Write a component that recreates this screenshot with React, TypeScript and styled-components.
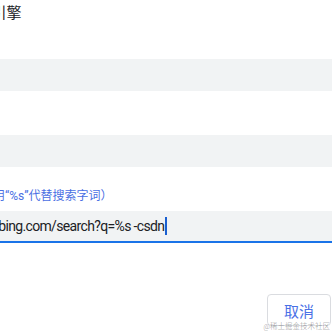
import React from 'react';
import styled, { createGlobalStyle } from 'styled-components';

const GlobalStyle = createGlobalStyle`
  html, body {
    margin: 0;
    padding: 0;
    background: #ffffff;
  }
  body {
    font-family: Roboto, "Noto Sans CJK SC", sans-serif;
    overflow: hidden;
  }
`;

interface FieldProps {
  label: string;
  value?: string;
  focused?: boolean;
}

function Field({ label, value, focused }: FieldProps) {
  return (
    <Group>
      <Label $focused={focused}>{label}</Label>
      <InputBox $focused={focused}>
        <Value>{value}</Value>
        {focused ? <Caret /> : <></>}
      </InputBox>
    </Group>
  );
}

export default function App() {
  return (
    <>
      <GlobalStyle />
      <Frame>
        <Dialog>
          <Title>修改搜索引擎</Title>
          <Form>
            <Field label="搜索引擎" />
            <Field label="快捷字词" />
            <Field
              label="网址格式（用“%s”代替搜索字词）"
              value="https://bing.com/search?q=%s -csdn"
              focused
            />
          </Form>
          <Buttons>
            <CancelButton>取消</CancelButton>
          </Buttons>
        </Dialog>
        <Watermark>@稀土掘金技术社区</Watermark>
      </Frame>
    </>
  );
}

const Frame = styled.div`
  position: relative;
  width: 332px;
  height: 332px;
  overflow: hidden;
`;

const Dialog = styled.div`
  margin-left: -67px;
  width: calc(100% + 67px);
  display: flex;
  flex-direction: column;
`;

const Title = styled.h2`
  margin: 0 0 0 -1.5px;
  height: 24px;
  font-size: 15px;
  line-height: 26px;
  font-weight: 400;
  color: #202124;
  white-space: nowrap;
`;

const Form = styled.div`
  display: flex;
  flex-direction: column;
  gap: 21px;
  margin-top: 12px;
`;

const Group = styled.div`
  display: flex;
  flex-direction: column;
  gap: 7px;
`;

const Label = styled.div<{ $focused?: boolean }>`
  height: 16px;
  font-size: 12px;
  line-height: 17px;
  white-space: nowrap;
  color: ${(p) => (p.$focused ? '#4a6fe3' : '#5f6368')};
`;

const InputBox = styled.div<{ $focused?: boolean }>`
  box-sizing: border-box;
  height: 32px;
  display: flex;
  align-items: center;
  padding-left: 25px;
  background: #f1f3f4;
  border-bottom: 2px solid ${(p) => (p.$focused ? '#1a73e8' : 'transparent')};
`;

const Value = styled.span`
  font-size: 14px;
  letter-spacing: -0.65px;
  color: #202124;
  white-space: pre;
`;

const Caret = styled.span`
  width: 1.5px;
  height: 18px;
  margin-left: 1px;
  background: #1a5fd0;
`;

const Buttons = styled.div`
  display: flex;
  justify-content: flex-end;
  margin-top: 51px;
  padding-right: 1px;
`;

const CancelButton = styled.button`
  box-sizing: border-box;
  width: 64px;
  height: 32px;
  border: 1px solid #dadce0;
  border-radius: 4px;
  background: #ffffff;
  color: #4a70e6;
  font-family: Roboto, "Noto Sans CJK SC", sans-serif;
  font-size: 15px;
  padding: 0;
  cursor: pointer;
`;

const Watermark = styled.div`
  position: absolute;
  right: 2px;
  bottom: 1px;
  font-size: 7.5px;
  line-height: 9px;
  color: rgba(0, 0, 0, 0.3);
  white-space: nowrap;
`;
